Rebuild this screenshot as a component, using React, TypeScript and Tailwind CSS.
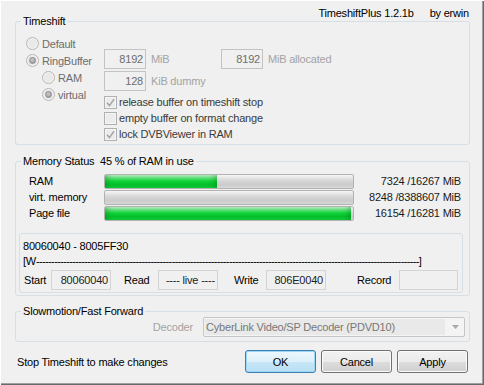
import React from "react";

const font = "font-['Liberation_Sans',Arial,sans-serif] text-[11px] tracking-[-0.2px]";

function Radio({ checked }: { checked?: boolean }) {
  return (
    <svg width="13" height="13" viewBox="0 0 13 13" className="shrink-0">
      <circle cx="6.5" cy="6.5" r="6" fill="#f3f3f3" stroke="#b4b4b4" />
      <circle cx="6.5" cy="6.5" r="4.6" fill="#e9e9e9" />
      {checked && (
        <>
          <circle cx="6.5" cy="6.5" r="3.4" fill="#9b9b9b" />
          <circle cx="6.3" cy="6.1" r="2" fill="#bdbdbd" />
        </>
      )}
    </svg>
  );
}

function Check({ checked }: { checked?: boolean }) {
  return (
    <svg width="13" height="13" viewBox="0 0 13 13" className="shrink-0">
      <rect x="0.5" y="0.5" width="12" height="12" fill="#f4f4f4" stroke="#b1b1b1" />
      <rect x="2" y="2" width="9" height="9" fill="#ececec" />
      {checked && <path d="M3 6.8 L5.4 9.6 L10 3.2" fill="none" stroke="#a4a4a4" strokeWidth="1.5" />}
    </svg>
  );
}

function Group({ title, className, children }: { title: string; className: string; children: React.ReactNode }) {
  return (
    <div className={`relative ml-[15px] w-[455px] rounded-[3px] border border-[#d5dfe5] ${className}`}>
      <span className="absolute -top-[8px] left-[5px] bg-[#f0f0f0] px-[2px] leading-[14px] whitespace-pre text-black">
        {title}
      </span>
      {children}
    </div>
  );
}

function EditBox({ value }: { value: string }) {
  return (
    <div className="flex h-[20px] w-[42px] items-center justify-end border border-[#c3c3c3] bg-[#f0f0f0] pr-[2px] text-[#6d6d6d]">
      {value}
    </div>
  );
}

function StaticBox({ value, w }: { value: string; w: string }) {
  return (
    <div className={`flex h-[20px] ${w} items-center justify-end border border-[#d4d4d4] bg-[#f0f0f0] pr-[2px] text-[#222]`}>
      {value}
    </div>
  );
}

const bars = [
  { label: "RAM", used: 7324, total: 16267 },
  { label: "virt. memory", used: 8248, total: 8388607 },
  { label: "Page file", used: 16154, total: 16281 },
];

function Bar({ pct }: { pct: number }) {
  return (
    <div className="h-[15px] w-[250px] overflow-hidden rounded-[2px] border border-[#b2b2b2] bg-[linear-gradient(to_bottom,#f7f7f7_0%,#e3e3e3_25%,#d3d3d3_50%,#cbcbcb_75%,#d8d8d8_100%)]">
      <div
        className="h-full bg-[linear-gradient(to_bottom,#c0f5c8_0%,#62df7a_22%,#0dd236_48%,#05bd2a_75%,#12d23b_100%)] shadow-[inset_6px_0_6px_-4px_rgba(0,90,20,0.35),inset_-6px_0_6px_-4px_rgba(0,90,20,0.35)]"
        style={{ width: `${pct}%` }}
      />
    </div>
  );
}

function Button({ label, primary }: { label: string; primary?: boolean }) {
  return (
    <div
      className={
        primary
          ? "flex h-[23px] w-[71px] items-center justify-center rounded-[3px] border border-[#3c7fb1] bg-[linear-gradient(to_bottom,#eef7fd_0%,#ddf0fb_50%,#c9e7f8_51%,#b9dff4_100%)] shadow-[inset_0_0_0_1px_#9fd7f7] text-black"
          : "flex h-[23px] w-[71px] items-center justify-center rounded-[3px] border border-[#707070] bg-[linear-gradient(to_bottom,#f2f2f2_0%,#ebebeb_50%,#dddddd_51%,#cfcfcf_100%)] shadow-[inset_0_0_0_1px_#fbfbfb] text-black"
      }
    >
      {label}
    </div>
  );
}

export default function App() {
  return (
    <div
      className={`${font} flex h-[385px] w-[484px] flex-col bg-[#f0f0f0] text-black shadow-[inset_1px_1px_#ffffff,inset_-1px_-1px_#696969,inset_-2px_-2px_#a0a0a0] leading-[14px]`}
    >
      {/* title line */}
      <div className="mt-[6px] flex h-[14px] justify-end pr-[15px]">
        <span>TimeshiftPlus 1.2.1b</span>
        <span className="ml-[16px]">by erwin</span>
      </div>

      {/* Timeshift */}
      <Group title="Timeshift" className="mt-[1px] h-[124px]">
        <div className="flex pl-[10px]">
          <div className="mt-[13px] w-[78px] text-[#6d6d6d]">
            <div className="flex h-[17px] items-center gap-[3px]">
              <Radio />
              <span>Default</span>
            </div>
            <div className="flex h-[17px] items-center gap-[3px]">
              <Radio checked />
              <span>RingBuffer</span>
            </div>
            <div className="flex h-[17px] items-center gap-[3px] pl-[16px]">
              <Radio />
              <span>RAM</span>
            </div>
            <div className="flex h-[17px] items-center gap-[3px] pl-[16px]">
              <Radio checked />
              <span>virtual</span>
            </div>
          </div>

          <div className="mt-[27px]">
            <div className="flex h-[20px] items-center">
              <EditBox value="8192" />
              <span className="w-[75px] pl-[5px] text-[#a3a3a3]">MiB</span>
              <EditBox value="8192" />
              <span className="pl-[5px] text-[#a3a3a3]">MiB allocated</span>
            </div>
            <div className="mt-[2px] flex h-[20px] items-center">
              <EditBox value="128" />
              <span className="pl-[5px] text-[#a3a3a3]">KiB dummy</span>
            </div>
            <div className="mt-[3px] text-[#3a3a3a]">
              <div className="flex h-[16px] items-center gap-[2px]">
                <Check checked />
                <span>release buffer on timeshift stop</span>
              </div>
              <div className="flex h-[16px] items-center gap-[2px]">
                <Check />
                <span>empty buffer on format change</span>
              </div>
              <div className="flex h-[16px] items-center gap-[2px]">
                <Check checked />
                <span>lock DVBViewer in RAM</span>
              </div>
            </div>
          </div>
        </div>
      </Group>

      {/* Memory Status */}
      <Group title={"Memory Status  45 % of RAM in use"} className="mt-[16px] h-[135px]">
        <div className="mt-[12px]">
          {bars.map((b) => (
            <div key={b.label} className="flex h-[16px] items-start">
              <span className="w-[88px] pl-[13px] leading-[15px]">{b.label}</span>
              <Bar pct={(b.used / b.total) * 100} />
              <span className="w-[107px] text-right leading-[15px] text-[#1a1a1a]">
                {b.used} /{b.total} MiB
              </span>
            </div>
          ))}
        </div>

        <div className="ml-[3px] mt-[11px] h-[60px] w-[444px] rounded-[3px] border border-[#d5dfe5] pl-[3px]">
          <div className="mt-[5px]">80060040 - 8005FF30</div>
          <div className="mt-[1px] whitespace-pre">
            [W<span className="tracking-[-0.65px]">{"-".repeat(127)}</span>]
          </div>
          <div className="mt-[2px] flex h-[20px] items-center">
            <span className="w-[28px] pl-[1px]">Start</span>
            <StaticBox value="80060040" w="w-[60px]" />
            <span className="w-[47px] pl-[13px]">Read</span>
            <StaticBox value="---- live ----" w="w-[60px]" />
            <span className="w-[48px] pl-[16px]">Write</span>
            <StaticBox value="806E0040" w="w-[60px]" />
            <span className="w-[73px] pl-[31px]">Record</span>
            <StaticBox value="" w="w-[59px]" />
          </div>
        </div>
      </Group>

      {/* Slowmotion */}
      <Group title="Slowmotion/Fast Forward" className="mt-[15px] h-[31px]">
        <div className="mt-[5px] flex h-[20px] items-center justify-end pr-[4px]">
          <span className="mr-[10px] text-[#a3a3a3]">Decoder</span>
          <div className="flex h-[20px] w-[262px] items-stretch rounded-[2px] border border-[#c6c6c6] bg-[#f4f4f4]">
            <div className="m-[1px] flex flex-1 items-center bg-[#e9e9e9] pl-[1px] text-[#777]">
              CyberLink Video/SP Decoder (PDVD10)
            </div>
            <div className="flex w-[18px] items-center justify-center">
              <svg width="7" height="4" viewBox="0 0 7 4">
                <path d="M0 0 H7 L3.5 4 Z" fill="#a8a8a8" />
              </svg>
            </div>
          </div>
        </div>
      </Group>

      {/* bottom */}
      <div className="mt-[8px] flex h-[23px] items-center pl-[17px] pr-[16px]">
        <span>Stop Timeshift to make changes</span>
        <div className="ml-auto flex gap-[5px]">
          <Button label="OK" primary />
          <Button label="Cancel" />
          <Button label="Apply" />
        </div>
      </div>
    </div>
  );
}
